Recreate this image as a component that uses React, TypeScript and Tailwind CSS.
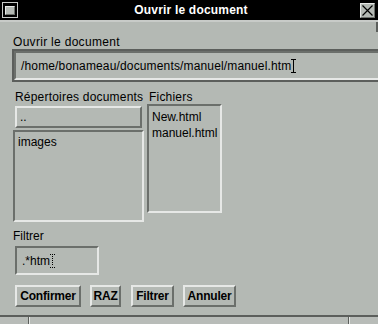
import React from "react";

const sunken =
  "border-2 border-t-[#6b6f6b] border-l-[#6b6f6b] border-b-[#e6e8e6] border-r-[#e6e8e6]";
const raised =
  "border-2 border-t-[#e6e8e6] border-l-[#e6e8e6] border-b-[#6b6f6b] border-r-[#6b6f6b]";

function IBeam() {
  return (
    <svg width="5" height="14" viewBox="0 0 5 14" className="shrink-0">
      <path d="M0 0.5H5M2.5 0.5V13.5M0 13.5H5" stroke="#000" strokeWidth="1" fill="none" />
    </svg>
  );
}

function DottedBeam() {
  return (
    <svg width="5" height="14" viewBox="0 0 5 14" className="shrink-0">
      <path d="M0 0.5H1M2 0.5H3M4 0.5H5M2.5 2V12" stroke="#000" strokeWidth="1" strokeDasharray="1 1" fill="none" />
      <path d="M0 13.5H1M2 13.5H3M4 13.5H5" stroke="#000" strokeWidth="1" fill="none" />
    </svg>
  );
}

function Btn({ label, w, ml }: { label: string; w: string; ml: string }) {
  return (
    <div
      className={`${raised} ${w} ${ml} h-[22px] flex items-center justify-center font-bold text-[12px] text-black tracking-[-0.2px]`}
    >
      {label}
    </div>
  );
}

export default function App() {
  return (
    <div className="w-[378px] h-[324px] overflow-hidden bg-[#b4b9b4] flex flex-col font-['Liberation_Sans',Arial,sans-serif] text-[12px] leading-[14px] text-black">
      {/* title bar */}
      <div className="h-[20px] bg-black flex items-center relative shrink-0">
        <div className="ml-[2px] w-[16px] h-[16px] border border-[#c8cac8] bg-black flex items-center justify-center">
          <div className="w-[10px] h-[9px] border border-t-[#e6e8e6] border-l-[#e6e8e6] border-b-[#6b6f6b] border-r-[#6b6f6b] bg-[#b4b9b4]" />
        </div>
        <div className="flex-1 text-center text-white font-bold text-[12px] tracking-[0.2px] pl-[4px]">
          Ouvrir le document
        </div>
        <div className="mr-[3px] w-[15px] h-[15px] bg-[#b4b9b4] border border-t-[#e6e8e6] border-l-[#e6e8e6] border-b-[#6b6f6b] border-r-[#6b6f6b] flex items-center justify-center">
          <svg width="13" height="13" viewBox="0 0 13 13">
            <path d="M1.5 1.5L11.5 11.5M11.5 1.5L1.5 11.5" stroke="#000" strokeWidth="1.2" />
          </svg>
        </div>
      </div>
      <div className="h-[2px] bg-[#c8cbc8] shrink-0" />

      {/* body */}
      <div className="h-[13px] flex justify-end shrink-0">
        <div className="w-[2px] h-[10px] bg-[#5c5f5c]" />
      </div>
      <div className="pl-[13px] h-[14px] tracking-[0.3px]">Ouvrir le document</div>
      <div className="ml-[12px] w-[370px] h-[33px] border-2 border-[#5c5f5c] shrink-0">
        <div className={`${sunken} h-full flex items-center pl-[5px]`}>
          <span className="tracking-[0.15px]">/home/bonameau/documents/manuel/manuel.htm</span>
          <IBeam />
        </div>
      </div>

      <div className="mt-[8px] ml-[13px] flex gap-[3px]">
        <div className="w-[131px] flex flex-col">
          <div className="pl-[2px] h-[14px] whitespace-nowrap tracking-[0.2px]">Répertoires documents</div>
          <div className={`${raised} ml-[2px] mt-[2px] w-[127px] h-[22px] flex items-center pl-[3px]`}>..</div>
          <div className={`${sunken} mt-[2px] h-[92px] pl-[3px] pt-[3px]`}>images</div>
        </div>
        <div className="w-[75px] flex flex-col">
          <div className="pl-[2px] h-[14px] tracking-[0.2px]">Fichiers</div>
          <div className={`${sunken} h-[109px] pl-[3px] pt-[3px] leading-[16px]`}>
            <div>New.html</div>
            <div>manuel.html</div>
          </div>
        </div>
      </div>

      <div className="mt-[7px] pl-[13px] h-[14px]">Filtrer</div>
      <div className={`${sunken} mt-[3px] ml-[15px] w-[84px] h-[29px] flex items-center pl-[5px]`}>
        <span>.*htm</span>
        <DottedBeam />
      </div>

      <div className="mt-[10px] flex">
        <Btn label="Confirmer" w="w-[66px]" ml="ml-[15px]" />
        <Btn label="RAZ" w="w-[31px]" ml="ml-[9px]" />
        <Btn label="Filtrer" w="w-[43px]" ml="ml-[10px]" />
        <Btn label="Annuler" w="w-[53px]" ml="ml-[9px]" />
      </div>

      <div className="mt-auto h-[2px] bg-[#5c5f5c] shrink-0" />
      <div className="h-[7px] bg-[#b8bcb8] flex shrink-0">
        <div className="w-[28px]" />
        <div className="w-[1px] bg-[#5c5f5c]" />
        <div className="w-[1px] bg-[#e6e8e6]" />
        <div className="flex-1" />
        <div className="w-[1px] bg-[#5c5f5c]" />
        <div className="w-[1px] bg-[#e6e8e6]" />
        <div className="w-[28px]" />
      </div>
    </div>
  );
}
